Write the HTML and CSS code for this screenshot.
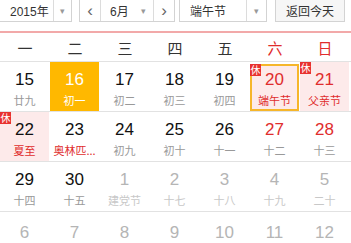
FILE: index.html
```html
<!DOCTYPE html>
<html lang="zh">
<head>
    <meta charset="UTF-8">
    <title>万年历</title>
    <link rel="stylesheet" href="styles.css">
</head>
<body>
    <div class="calendar">
        <div class="toolbar">
            <div class="select year-select">
                <span class="select-text">2015年</span>
                <span class="select-arrow">&#9662;</span>
            </div>
            <div class="select month-select">
                <span class="step">&lsaquo;</span>
                <span class="select-text">6月</span>
                <span class="select-arrow plain">&#9662;</span>
                <span class="step right">&rsaquo;</span>
            </div>
            <div class="select holiday-select">
                <span class="select-text">端午节</span>
                <span class="select-arrow">&#9662;</span>
            </div>
            <button class="today-btn">返回今天</button>
        </div>

        <div class="weekdays">
            <div>一</div><div>二</div><div>三</div><div>四</div><div>五</div>
            <div class="weekend">六</div><div class="weekend">日</div>
        </div>

        <div class="week">
            <div class="day"><span class="num">15</span><span class="lunar">廿九</span></div>
            <div class="day today"><span class="num">16</span><span class="lunar">初一</span></div>
            <div class="day"><span class="num">17</span><span class="lunar">初二</span></div>
            <div class="day"><span class="num">18</span><span class="lunar">初三</span></div>
            <div class="day"><span class="num">19</span><span class="lunar">初四</span></div>
            <div class="day rest selected"><span class="badge">休</span><span class="num red">20</span><span class="lunar red">端午节</span></div>
            <div class="day rest"><span class="badge">休</span><span class="num red">21</span><span class="lunar red">父亲节</span></div>
        </div>
        <div class="week">
            <div class="day rest"><span class="badge">休</span><span class="num">22</span><span class="lunar red">夏至</span></div>
            <div class="day"><span class="num">23</span><span class="lunar red">奥林匹...</span></div>
            <div class="day"><span class="num">24</span><span class="lunar">初九</span></div>
            <div class="day"><span class="num">25</span><span class="lunar">初十</span></div>
            <div class="day"><span class="num">26</span><span class="lunar">十一</span></div>
            <div class="day"><span class="num red">27</span><span class="lunar">十二</span></div>
            <div class="day"><span class="num red">28</span><span class="lunar">十三</span></div>
        </div>
        <div class="week">
            <div class="day"><span class="num">29</span><span class="lunar">十四</span></div>
            <div class="day"><span class="num">30</span><span class="lunar">十五</span></div>
            <div class="day other"><span class="num">1</span><span class="lunar">建党节</span></div>
            <div class="day other"><span class="num">2</span><span class="lunar">十七</span></div>
            <div class="day other"><span class="num">3</span><span class="lunar">十八</span></div>
            <div class="day other"><span class="num">4</span><span class="lunar">十九</span></div>
            <div class="day other"><span class="num">5</span><span class="lunar">二十</span></div>
        </div>
        <div class="week last">
            <div class="day other"><span class="num">6</span></div>
            <div class="day other"><span class="num">7</span></div>
            <div class="day other"><span class="num">8</span></div>
            <div class="day other"><span class="num">9</span></div>
            <div class="day other"><span class="num">10</span></div>
            <div class="day other"><span class="num">11</span></div>
            <div class="day other"><span class="num">12</span></div>
        </div>
    </div>
</body>
</html>
```

FILE: styles.css
```css
body {
    margin: 0;
    padding: 0;
    background: #fff;
    font-family: 'Liberation Sans', Arial, 'Noto Sans CJK SC', sans-serif;
    overflow: hidden;
}
.calendar {
    width: 351px;
}
.toolbar {
    display: flex;
    align-items: stretch;
    height: 23px;
    margin-top: -1px;
    padding-bottom: 9px;
    border-bottom: 2px solid #f2a9a9;
    font-size: 12px;
    color: #333;
}
.select {
    display: flex;
    align-items: stretch;
    border: 1px solid #d3d3d3;
    background: #fff;
    box-sizing: border-box;
}
.select-text {
    display: flex;
    align-items: center;
}
.select-arrow {
    flex: 1;
    display: flex;
    align-items: center;
    justify-content: center;
    border-left: 1px solid #dcdcdc;
    color: #999;
    font-size: 9px;
}
.select-arrow.plain {
    border-left: none;
}
.year-select {
    width: 73px;
    margin-left: -1px;
}
.year-select .select-text {
    width: 53px;
    padding-left: 10px;
    box-sizing: border-box;
}
.month-select {
    width: 96px;
    margin-left: 7px;
}
.month-select .select-text {
    width: 24px;
    padding-left: 9px;
}
.step {
    display: flex;
    align-items: center;
    justify-content: center;
    width: 20px;
    border-right: 1px solid #dcdcdc;
    color: #666;
    font-size: 17px;
}
.step.right {
    border-right: none;
    border-left: 1px solid #dcdcdc;
}
.holiday-select {
    width: 88px;
    margin-left: 4px;
}
.holiday-select .select-text {
    width: 66px;
    padding-left: 10px;
    box-sizing: border-box;
}
.today-btn {
    width: 70px;
    margin-left: 8px;
    padding: 0;
    border: 1px solid #d3d3d3;
    background: #f6f6f6;
    color: #333;
    font-family: inherit;
    font-size: 12px;
}
.weekdays {
    display: grid;
    grid-template-columns: repeat(7, 50px);
    height: 28px;
    align-items: center;
    border-bottom: 1px solid #e2e2e2;
    font-family: 'Noto Sans CJK SC', sans-serif;
    font-size: 15px;
    color: #333;
    text-align: center;
}
.weekdays .weekend {
    color: #e02d2d;
}
.week {
    display: grid;
    grid-template-columns: repeat(7, 50px);
    height: 49px;
    border-bottom: 1px solid #e2e2e2;
}
.week.last {
    border-bottom: none;
}
.day {
    position: relative;
    display: flex;
    flex-direction: column;
    align-items: center;
    width: 49px;
    padding-top: 8px;
    box-sizing: border-box;
}
.week.last .day {
    padding-top: 11px;
}
.num {
    font-size: 17px;
    line-height: 20px;
    color: #111;
}
.lunar {
    margin-top: 3px;
    font-family: 'Noto Sans CJK SC', sans-serif;
    font-size: 11px;
    line-height: 14px;
    color: #999;
    white-space: nowrap;
}
.red {
    color: #e02d2d;
}
.rest {
    background: #fdeaea;
}
.today {
    background: #ffb800;
}
.today .num,
.today .lunar {
    color: #fff;
}
.selected {
    margin-top: 2px;
    padding-top: 4px;
    border: 2px solid #f6b62a;
}
.badge {
    position: absolute;
    top: 0;
    left: 0;
    width: 11px;
    height: 12px;
    background: #e8312f;
    color: #fff;
    font-family: 'Noto Sans CJK SC', sans-serif;
    font-size: 10px;
    line-height: 12px;
    text-align: center;
}
.selected .badge {
    top: -2px;
    left: -2px;
}
.other .num {
    color: #b5b5b5;
}
.other .lunar {
    color: #c8c8c8;
}
```
